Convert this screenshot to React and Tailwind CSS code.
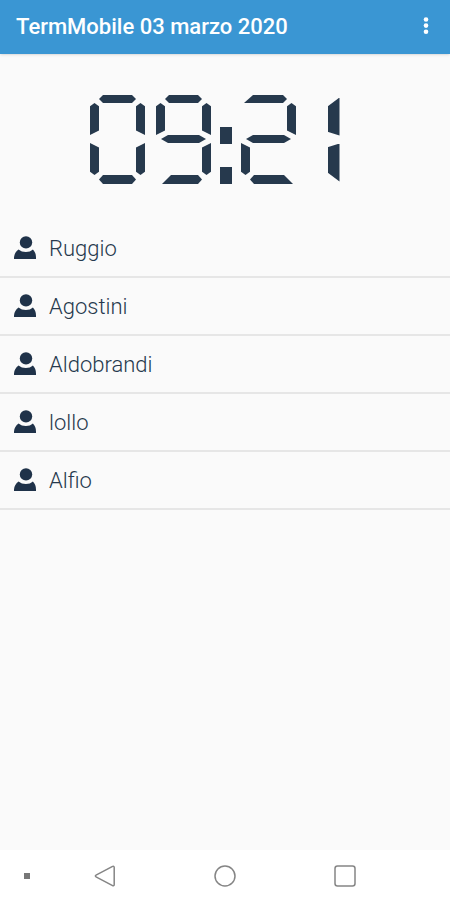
import { useState } from 'react';

const PEOPLE = ['Ruggio', 'Agostini', 'Aldobrandi', 'lollo', 'Alfio'];

// each segment sits in a cell of the digit grid and is clipped to its shape
const SEGMENTS = {
  top: 'col-span-3 col-start-1 row-start-1 [clip-path:polygon(9px_50%,13px_0,42px_0,46px_50%,42px_100%,13px_100%)]',
  topOpen: 'col-span-3 col-start-1 row-start-1 [clip-path:polygon(3px_100%,12px_0,42px_0,46px_50%,42px_100%)]',
  upperLeft: 'col-start-1 row-start-2 [clip-path:polygon(50%_0,100%_10%,100%_86%,0_100%,0_10%)]',
  upperRight: 'col-start-3 row-start-2 [clip-path:polygon(50%_0,100%_10%,100%_100%,0_86%,0_10%)]',
  middle: 'col-span-3 col-start-1 row-start-3 [clip-path:polygon(5px_50%,12px_0,43px_0,50px_50%,43px_100%,12px_100%)]',
  lowerLeft: 'col-start-1 row-start-4 [clip-path:polygon(0_0,100%_14%,100%_90%,50%_100%,0_90%)]',
  lowerRight: 'col-start-3 row-start-4 [clip-path:polygon(100%_0,100%_90%,50%_100%,0_90%,0_14%)]',
  bottom: 'col-span-3 col-start-1 row-start-5 [clip-path:polygon(9px_50%,13px_0,42px_0,46px_50%,42px_100%,13px_100%)]',
  bottomOpenLeft: 'col-span-3 col-start-1 row-start-5 [clip-path:polygon(6px_100%,15px_0,42px_0,46px_50%,42px_100%)]',
  bottomOpenRight: 'col-span-3 col-start-1 row-start-5 [clip-path:polygon(9px_50%,13px_0,43px_0,52px_100%,13px_100%)]',
};

const DIGITS = {
  0: ['top', 'upperLeft', 'upperRight', 'lowerLeft', 'lowerRight', 'bottom'],
  2: ['topOpen', 'upperRight', 'middle', 'lowerLeft', 'bottomOpenRight'],
  9: ['top', 'upperLeft', 'upperRight', 'middle', 'lowerRight', 'bottomOpenLeft'],
};

const Digit = ({ value }) => {
  if (value === '1') {
    return (
      <span className="flex h-[89px] w-[53px] flex-col items-center justify-center gap-2">
        <span className="h-[38px] w-3 bg-[#26394d] [clip-path:polygon(100%_0,100%_100%,0_90%,0_24%)]" />
        <span className="h-[38px] w-3 bg-[#26394d] [clip-path:polygon(100%_0,100%_100%,0_76%,0_10%)]" />
      </span>
    );
  }
  return (
    <span className="grid grid-cols-[9px_37px_9px] grid-rows-[8px_32px_8px_32px_9px]">
      {DIGITS[value].map((name) => (
        <span key={name} className={`bg-[#26394d] ${SEGMENTS[name]}`} />
      ))}
    </span>
  );
};

const Colon = () => (
  <span className="-mx-[2px] flex h-[89px] flex-col justify-end gap-[23px]">
    <span className="h-[17px] w-3 bg-[#26394d]" />
    <span className="h-[17px] w-3 bg-[#26394d]" />
  </span>
);

const Clock = ({ time }) => (
  <div role="timer" aria-label={time} className="flex justify-center gap-[11px] pt-[41px] pb-9">
    {time.split('').map((char, i) => (char === ':' ? <Colon key={i} /> : <Digit key={i} value={char} />))}
  </div>
);

const PersonIcon = () => (
  <svg viewBox="0 0 22 26" className="h-[26px] w-[22px] shrink-0" fill="#1f3249" aria-hidden="true">
    <circle cx="12" cy="6.4" r="6.2" />
    <path d="M0 23v-1.500c.3-3.200 1.800-6 4.600-7.900 1.900 1.700 4.500 2.500 7.300 2.500s5.200-.8 7-2.500c2.100 2.100 3.100 4.700 3.100 7.900V23z" />
  </svg>
);

const navButton = 'flex h-full items-center justify-center text-[#858585]';

const NavBar = () => (
  <nav className="grid h-[50px] grid-cols-[45px_1fr_1fr_1fr_45px] bg-white pt-px">
    <button type="button" aria-label="Nascondi" className={`${navButton} pl-2`}>
      <span className="size-[6px] bg-[#777777]" />
    </button>
    <button type="button" aria-label="Indietro" className={navButton}>
      <svg width="22" height="22" viewBox="0 0 22 22" fill="none" stroke="currentColor" strokeWidth="1.5" strokeLinejoin="round">
        <path d="M18.600 1.400 2 10.200c-.8.400-.8 1.200 0 1.600L18.600 20.600c.7.400 1.600 0 1.600-.9V2.300c0-.9-.9-1.300-1.600-.9Z" />
      </svg>
    </button>
    <button type="button" aria-label="Home" className={navButton}>
      <svg width="22" height="22" viewBox="0 0 22 22" fill="none" stroke="currentColor" strokeWidth="1.5">
        <circle cx="11" cy="11" r="10" />
      </svg>
    </button>
    <button type="button" aria-label="Recenti" className={navButton}>
      <svg width="22" height="22" viewBox="0 0 22 22" fill="none" stroke="currentColor" strokeWidth="1.5">
        <rect x="1" y="1" width="20" height="20" rx="2.500" />
      </svg>
    </button>
  </nav>
);

export default function App() {
  const [people] = useState(PEOPLE);

  return (
    <div className="flex min-h-screen flex-col bg-[#fafafa] font-['Roboto',sans-serif]">
      <header className="flex h-[54px] items-center justify-between bg-[#3a96d3] pl-4 shadow-sm">
        <h1 className="text-[22px] leading-7 font-medium text-white">TermMobile 03 marzo 2020</h1>
        <button type="button" aria-label="Menu" className="flex h-full w-12 items-center justify-center">
          <svg width="6" height="20" viewBox="0 0 6 20" fill="#ffffff">
            <circle cx="3" cy="2.500" r="2.300" />
            <circle cx="3" cy="8.600" r="2.300" />
            <circle cx="3" cy="14.700" r="2.300" />
          </svg>
        </button>
      </header>
      <main className="flex-1">
        <Clock time="09:21" />
        <ul>
          {people.map((name) => (
            <li key={name} className="flex h-[58px] items-center gap-[13px] border-b-2 border-[#e6e6e6] pt-[2px] pl-[14px]">
              <PersonIcon />
              <span className="text-[22px] leading-7 font-light text-[#26394d]">{name}</span>
            </li>
          ))}
        </ul>
      </main>
      <NavBar />
    </div>
  );
}
